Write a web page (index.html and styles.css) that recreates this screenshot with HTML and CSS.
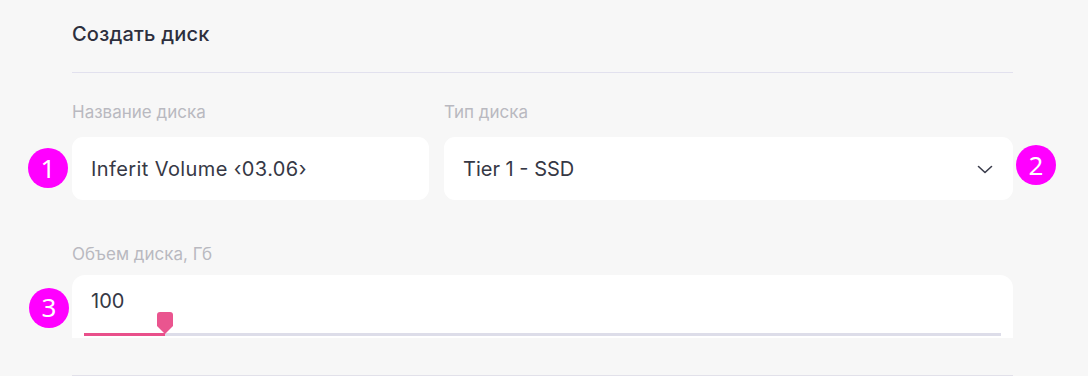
FILE: index.html
```html
<!DOCTYPE html>
<html lang="ru">
<head>
<meta charset="utf-8">
<title>Создать диск</title>
<link rel="stylesheet" href="styles.css">
</head>
<body>
<div class="page">
  <header class="head">
    <h1 class="title">Создать диск</h1>
  </header>
  <div class="row">
    <div class="field">
      <div class="label">Название диска</div>
      <div class="control">
        <span class="value name">Inferit Volume &lsaquo;03.06&rsaquo;</span>
        <span class="badge badge-left">1</span>
      </div>
    </div>
    <div class="field">
      <div class="label">Тип диска</div>
      <div class="control select">
        <span class="value">Tier 1 - SSD</span>
        <svg class="chev" width="16" height="9" viewBox="0 0 16 9"><polyline points="1.5,1.5 8,7.5 14.5,1.5" fill="none" stroke="#3a3c4b" stroke-width="1.6" stroke-linecap="round" stroke-linejoin="round"/></svg>
        <span class="badge badge-right">2</span>
      </div>
    </div>
  </div>
  <div class="field size">
    <div class="label">Объем диска, Гб</div>
    <div class="rangebox-wrap">
      <div class="rangebox">
        <div class="rvalue">100</div>
        <div class="slider">
          <div class="track"><div class="fill" style="width:81px"></div></div>
          <svg class="thumb" width="16" height="22" viewBox="0 0 16 22"><path d="M0 3 Q0 0 3 0 H13 Q16 0 16 3 V14 L8 22 L0 14 Z" fill="#ea558f"/></svg>
        </div>
      </div>
      <span class="badge badge-left b3">3</span>
    </div>
  </div>
  <div class="bottom-line"></div>
</div>
</body>
</html>
```
FILE: styles.css
```css
* { box-sizing: border-box; }
html, body { margin: 0; padding: 0; }
body {
  background: #f7f7f7;
  font-family: Inter, "Noto Sans", "Liberation Sans", sans-serif;
  color: #2f3142;
  width: 1088px;
  height: 376px;
  overflow: hidden;
}
.page {
  margin-left: 72px;
  width: 941px;
}
.head {
  height: 73px;
  border-bottom: 1px solid #e2e1ee;
  padding-top: 22px;
}
.title {
  margin: 0;
  font-size: 20px;
  line-height: 24px;
  font-weight: 500;
  color: #2d2f3d;
  letter-spacing: 0.2px;
}
.row {
  display: grid;
  grid-template-columns: 357px 1fr;
  column-gap: 15px;
  margin-top: 29px;
}
.label {
  font-size: 17px;
  line-height: 20px;
  color: #b9b9c0;
  margin-bottom: 15px;
}
.control {
  position: relative;
  height: 63px;
  background: #fff;
  border-radius: 11px;
  display: flex;
  align-items: center;
  padding: 0 20px 0 19px;
}
.value {
  font-size: 20px;
  line-height: 24px;
  color: #363845;
}
.name { letter-spacing: 0.4px; }
.select { justify-content: space-between; }
.chev { display: block; margin-top: 1px; }
.badge {
  position: absolute;
  width: 40px;
  height: 40px;
  border-radius: 50%;
  background: #ff00ff;
  color: #fff;
  font-family: "Noto Sans", "DejaVu Sans", sans-serif;
  font-size: 26px;
  line-height: 40px;
  text-align: center;
}
.badge-left { left: -44px; top: 11px; }
.badge-right { left: calc(100% + 3px); top: 8px; }
.size { margin-top: 44px; }
.size .label { margin-bottom: 11px; }
.rangebox-wrap { position: relative; }
.b3 { left: -43px; top: 13px; line-height: 38px; }
.rangebox {
  height: 63px;
  background: #fff;
  border-radius: 13px 13px 0 0;
  padding: 0 12px;
  overflow: hidden;
}
.rvalue {
  padding-left: 7px;
  margin-top: 15px;
  height: 22px;
  font-size: 20px;
  line-height: 22px;
  color: #363845;
}
.slider {
  position: relative;
  height: 25px;
}
.track {
  position: absolute;
  left: 0; right: 0; bottom: 1px;
  height: 3px;
  background: #dddde9;
}
.fill {
  height: 100%;
  background: #e9508b;
}
.thumb {
  position: absolute;
  left: 73px;
  top: 0;
  display: block;
}
.bottom-line {
  margin-top: 37px;
  height: 1px;
  background: #e2e1ea;
}
```
